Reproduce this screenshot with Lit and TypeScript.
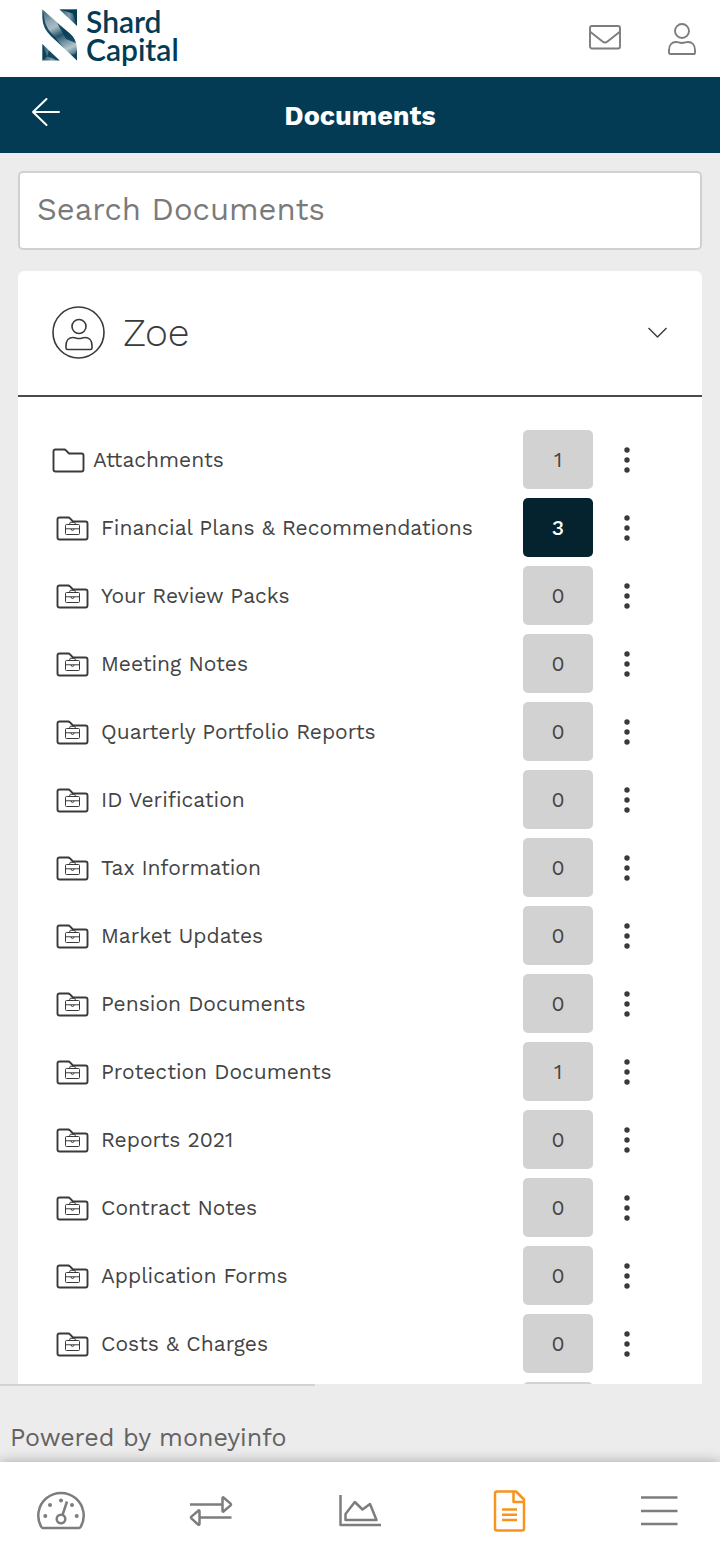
import { LitElement, html, svg, css, nothing } from "lit";
import { customElement } from "lit/decorators.js";
import { classMap } from "lit/directives/class-map.js";

interface Folder {
  name: string;
  count: number | null;
  plain?: boolean;
}

const FOLDERS: Folder[] = [
  { name: "Attachments", count: 1, plain: true },
  { name: "Financial Plans & Recommendations", count: 3 },
  { name: "Your Review Packs", count: 0 },
  { name: "Meeting Notes", count: 0 },
  { name: "Quarterly Portfolio Reports", count: 0 },
  { name: "ID Verification", count: 0 },
  { name: "Tax Information", count: 0 },
  { name: "Market Updates", count: 0 },
  { name: "Pension Documents", count: 0 },
  { name: "Protection Documents", count: 1 },
  { name: "Reports 2021", count: 0 },
  { name: "Contract Notes", count: 0 },
  { name: "Application Forms", count: 0 },
  { name: "Costs & Charges", count: 0 },
  { name: "", count: null },
];

const person = svg`
  <circle cx="14" cy="8" r="7" />
  <path d="M2.6 31 Q1 31 1 29.4 V27 C1 22 4 19 8 19 C10.5 19 11 20 14 20 C17 20 17.5 19 20 19 C24 19 27 22 27 27 V29.4 Q27 31 25.4 31 Z" />
`;

const NAV = [
  {
    label: "Dashboard",
    art: svg`
      <path d="M17 50 Q16 50 15.5 49.2 A22.7 22.7 0 1 1 54.5 49.2 Q54 50 53 50 Z" />
      <circle cx="35" cy="41" r="4.3" />
      <path d="M36.5 37 L41 23.5" />
      <g class="dots">
        <circle cx="19.3" cy="38" r="2" /><circle cx="24" cy="27" r="2" />
        <circle cx="35" cy="22.5" r="2" /><circle cx="46" cy="27" r="2" />
        <circle cx="50.7" cy="38" r="2" />
      </g>`,
  },
  {
    label: "Transactions",
    art: svg`
      <path d="M14 26.5 H46 M46.5 20.5 Q46.5 18.5 48 20 L54.6 25.6 Q55.4 26.5 54.6 27.4 L48 33 Q46.5 34.5 46.5 32.5 Z" />
      <path d="M55.5 39.5 H24 M23.5 33.5 Q23.5 31.5 22 33 L15.4 38.6 Q14.6 39.5 15.4 40.4 L22 46.5 Q23.5 47.5 23.5 45.5 Z" />`,
  },
  {
    label: "Valuations",
    art: svg`
      <path d="M15.5 17 V47 H56" />
      <path d="M20.5 42 V36 L29.8 24 L37.5 31.5 L45 26 L51.5 42 Z" />`,
  },
  {
    label: "Documents",
    active: true,
    art: svg`
      <path d="M22 13.5 H41 L49 21.5 V50.5 Q49 52.5 47 52.5 H22 Q20 52.5 20 50.5 V15.5 Q20 13.5 22 13.5 Z" />
      <path d="M38.5 13.5 V24 H49 M27 31.5 H42 M27 36.7 H42 M27 42 H42" />`,
  },
  { label: "Menu", art: svg`<path d="M17 19.5 H53.5 M17 33 H53.5 M17 46 H53.5" />` },
];

@customElement("folder-row")
class FolderRow extends LitElement {
  static properties = { folder: { attribute: false } };
  declare folder: Folder;

  static styles = css`
    :host {
      display: flex;
      align-items: center;
      height: 59px;
    }
    .link {
      flex: 1;
      display: flex;
      align-items: center;
      gap: 12px;
      padding-left: 4px;
      color: #444;
      text-decoration: none;
      font-size: 21px;
      line-height: 28px;
    }
    .link.plain {
      padding-left: 0;
      gap: 8px;
    }
    svg {
      display: block;
      flex: none;
      fill: none;
      stroke: #3a3a3a;
      stroke-linejoin: round;
    }
    .count {
      width: 70px;
      height: 59px;
      border-radius: 5px;
      background: #d2d2d2;
      color: #444;
      display: flex;
      align-items: center;
      justify-content: center;
      font-size: 21px;
    }
    .count.unread {
      background: #04232f;
      color: #fff;
      font-weight: 500;
    }
    .more {
      width: 68px;
      height: 59px;
      padding: 0;
      border: 0;
      background: none;
      display: flex;
      align-items: center;
      justify-content: center;
    }
    .more svg {
      fill: #3a3a3a;
      stroke: none;
    }
  `;

  render() {
    const { name, count, plain } = this.folder;
    return html`
      ${name
        ? html`<a class=${classMap({ link: true, plain: !!plain })} href="#">
            <svg width="33" height="26" viewBox="0 0 33 26" stroke-width="1.9" aria-hidden="true">
              <path
                d="M3.5 2.5 H12.2 Q13.3 2.5 14 3.3 L17 6.5 H29.5 Q31.5 6.5 31.5 8.5 V22.5 Q31.5 24.5 29.5 24.5 H3.5 Q1.5 24.5 1.5 22.5 V4.5 Q1.5 2.5 3.5 2.5 Z"
              />
              ${plain
                ? nothing
                : svg`<g stroke-width="1">
                    <rect x="9.5" y="9.5" width="14" height="10" rx="1" />
                    <path d="M13.8 9.5 V8 Q13.8 7.3 14.6 7.3 H18.4 Q19.2 7.3 19.2 8 V9.5 M9.5 13.8 H23.5 M15 13.8 Q15 15.5 16.5 15.5 Q18 15.5 18 13.8" />
                  </g>`}
            </svg>
            <span>${name}</span>
          </a>`
        : html`<span class="link"></span>`}
      <span class=${classMap({ count: true, unread: count === 3 })}>${count ?? nothing}</span>
      <button class="more" aria-label=${"Options for " + (name || "folder")}>
        <svg width="6" height="26" viewBox="0 0 6 26">
          <circle cx="3" cy="3" r="2.7" />
          <circle cx="3" cy="13" r="2.7" />
          <circle cx="3" cy="23" r="2.7" />
        </svg>
      </button>
    `;
  }
}

@customElement("app-root")
class AppRoot extends LitElement {
  static styles = css`
    :host {
      display: flex;
      flex-direction: column;
      height: 100vh;
      background: #ececec;
      color: #3a3a3a;
      font-family: "Work Sans", Inter, "Open Sans", sans-serif;
      font-weight: 400;
    }
    * {
      box-sizing: border-box;
    }
    svg {
      display: block;
      flex: none;
      fill: none;
      stroke: currentColor;
      stroke-linejoin: round;
    }
    button {
      padding: 0;
      border: 0;
      background: none;
      color: inherit;
      font: inherit;
    }
    .top {
      flex: none;
      height: 77px;
      display: flex;
      align-items: center;
      justify-content: space-between;
      padding: 0 24px 0 42px;
      background: #fff;
    }
    .logo {
      display: flex;
      align-items: center;
      gap: 8px;
      padding-bottom: 7px;
      color: #033b55;
      text-decoration: none;
      font: 600 30px/28px Lato, sans-serif;
    }
    .logo svg {
      stroke: none;
    }
    .wordmark {
      display: flex;
      flex-direction: column;
    }
    .tools {
      display: flex;
      align-items: center;
      gap: 47px;
      color: #7d7d7d;
    }
    .bar {
      flex: none;
      height: 76px;
      display: grid;
      grid-template-columns: 30px 1fr 30px;
      align-items: center;
      padding: 0 31px;
      background: #033b55;
      color: #fff;
    }
    .back {
      padding-bottom: 6px;
    }
    h1 {
      margin: 0;
      padding-top: 2px;
      text-align: center;
      font-size: 27px;
      line-height: 32px;
      font-weight: 700;
    }
    main {
      flex: 1;
      min-height: 0;
      overflow: hidden;
      padding: 18px 18px 0;
    }
    .search {
      display: block;
      width: 100%;
      height: 79px;
      margin-bottom: 21px;
      padding: 0 17px 2px;
      border: 2px solid #d0d0d0;
      border-radius: 5px;
      background: #fff;
      color: #3a3a3a;
      font: 400 31px "Work Sans", Inter, sans-serif;
    }
    .search::placeholder {
      color: #7a7a7a;
      opacity: 1;
    }
    .card {
      border-radius: 6px;
      background: #fff;
    }
    .owner {
      width: 100%;
      height: 126px;
      display: flex;
      align-items: center;
      gap: 18px;
      padding: 0 35px 2px 34px;
      border-bottom: 2px solid #4a4a4a;
      text-align: left;
    }
    .owner h2 {
      flex: 1;
      margin: 0;
      padding-top: 2px;
      font-size: 39px;
      line-height: 48px;
      font-weight: 300;
    }
    .list {
      display: flex;
      flex-direction: column;
      gap: 9px;
      margin: 0;
      padding: 33px 41px 33px 34px;
      list-style: none;
    }
    footer {
      flex: none;
      height: 78px;
      font-size: 25px;
      line-height: 32px;
      color: #636363;
    }
    .rule {
      width: 315px;
      margin: 0 0 36px;
      border: 0;
      border-top: 2px solid #d2d2d2;
    }
    footer p {
      margin: 0;
      padding: 0 10px;
    }
    nav {
      flex: none;
      height: 96px;
      display: flex;
      align-items: center;
      justify-content: space-between;
      padding: 0 26px;
      background: #fff;
      color: #7d7d7d;
      box-shadow: 0 0 12px rgba(0, 0, 0, 0.3);
    }
    .tab {
      color: inherit;
    }
    .tab.active {
      color: #f7941d;
    }
    .dots {
      fill: currentColor;
      stroke: none;
    }
  `;

  render() {
    return html`
      <header class="top">
        <a class="logo" href="#">
          <svg width="36" height="52" viewBox="0 0 36 52" aria-hidden="true">
            <defs>
              <linearGradient id="ribbon" gradientUnits="userSpaceOnUse" x1="0" y1="0" x2="24" y2="52">
                <stop offset="0" stop-color="#2c5a70" />
                <stop offset="0.25" stop-color="#8fa8b4" />
                <stop offset="0.38" stop-color="#a9bcc5" />
                <stop offset="0.55" stop-color="#24536b" />
                <stop offset="0.68" stop-color="#6f909f" />
                <stop offset="0.82" stop-color="#b4c4cb" />
                <stop offset="1" stop-color="#24536b" />
              </linearGradient>
              <linearGradient id="facet" x1="0" y1="0" x2="1" y2="0">
                <stop offset="0" stop-color="#24536b" />
                <stop offset="0.55" stop-color="#7f9cab" />
                <stop offset="1" stop-color="#033b55" />
              </linearGradient>
            </defs>
            <path fill="url(#ribbon)" d="M0.500 0.500 L26 23 Q35 30 35 41 V51.500 L9 27 Q0.500 19 0.500 9 Z" />
            <path fill="#033b55" opacity="0.85" d="M0.500 0.500 L3 13 Q5 20 11 26 L22 39 L9 27 Q0.500 19 0.500 9 Z" />
            <path fill="#033b55" opacity="0.85" d="M15 13.700 L26 23 Q32 27 34 34 L24 30 Z" />
            <path fill="#033b55" opacity="0.7" d="M35 41 V51.500 L29 45.600 L33 45 Z" />
            <path fill="url(#facet)" d="M17.500 0.500 H35 V17 Z" />
            <path fill="#033b55" d="M35 0.500 V17 L31 4.500 L17.500 0.500 Z" />
            <path fill="url(#facet)" d="M0.500 35 V51.500 H17.500 Z" />
            <path fill="#033b55" opacity="0.85" d="M0.500 35 L5 47.500 L0.500 51.500 Z M5 47.500 L7 41.500 L17.500 51.500 Z" />
          </svg>
          <span class="wordmark"><span>Shard</span><span>Capital</span></span>
        </a>
        <div class="tools">
          <button aria-label="Messages">
            <svg width="32" height="30" viewBox="0 0 32 30" stroke-width="1.9">
              <rect x="1" y="2" width="30" height="22.5" rx="2" />
              <path d="M1.5 8 L13.5 17.5 Q16 19.5 18.5 17.5 L30.5 8" />
            </svg>
          </button>
          <button aria-label="Profile">
            <svg width="28" height="34" viewBox="0 -1 28 34" stroke-width="1.9">${person}</svg>
          </button>
        </div>
      </header>

      <div class="bar">
        <button class="back" aria-label="Back">
          <svg width="30" height="30" viewBox="0 0 30 30" stroke-width="2" stroke-linecap="round">
            <path d="M15.5 2 L2 15 L15.5 28 M2 15 H28" />
          </svg>
        </button>
        <h1>Documents</h1>
      </div>

      <main>
        <input class="search" type="text" placeholder="Search Documents" aria-label="Search Documents" />
        <section class="card">
          <button class="owner" aria-expanded="true">
            <svg width="53" height="53" viewBox="0 0 53 53" stroke-width="1.6">
              <circle cx="26.5" cy="26.5" r="25.5" />
              <g transform="translate(13 12.5)">${person}</g>
            </svg>
            <h2>Zoe</h2>
            <svg width="19" height="11" viewBox="0 0 19 11" stroke-width="1.4">
              <path d="M0.5 1 L9.5 10 L18.5 1" />
            </svg>
          </button>
          <ul class="list">
            ${FOLDERS.map((f) => html`<li><folder-row .folder=${f}></folder-row></li>`)}
          </ul>
        </section>
      </main>

      <footer>
        <hr class="rule" />
        <p>Powered by moneyinfo</p>
      </footer>

      <nav>
        ${NAV.map(
          (n) => html`<button class=${classMap({ tab: true, active: !!n.active })} aria-label=${n.label}>
            <svg width="70" height="64" viewBox="0 0 70 64" stroke-width="2.5">${n.art}</svg>
          </button>`
        )}
      </nav>
    `;
  }
}
